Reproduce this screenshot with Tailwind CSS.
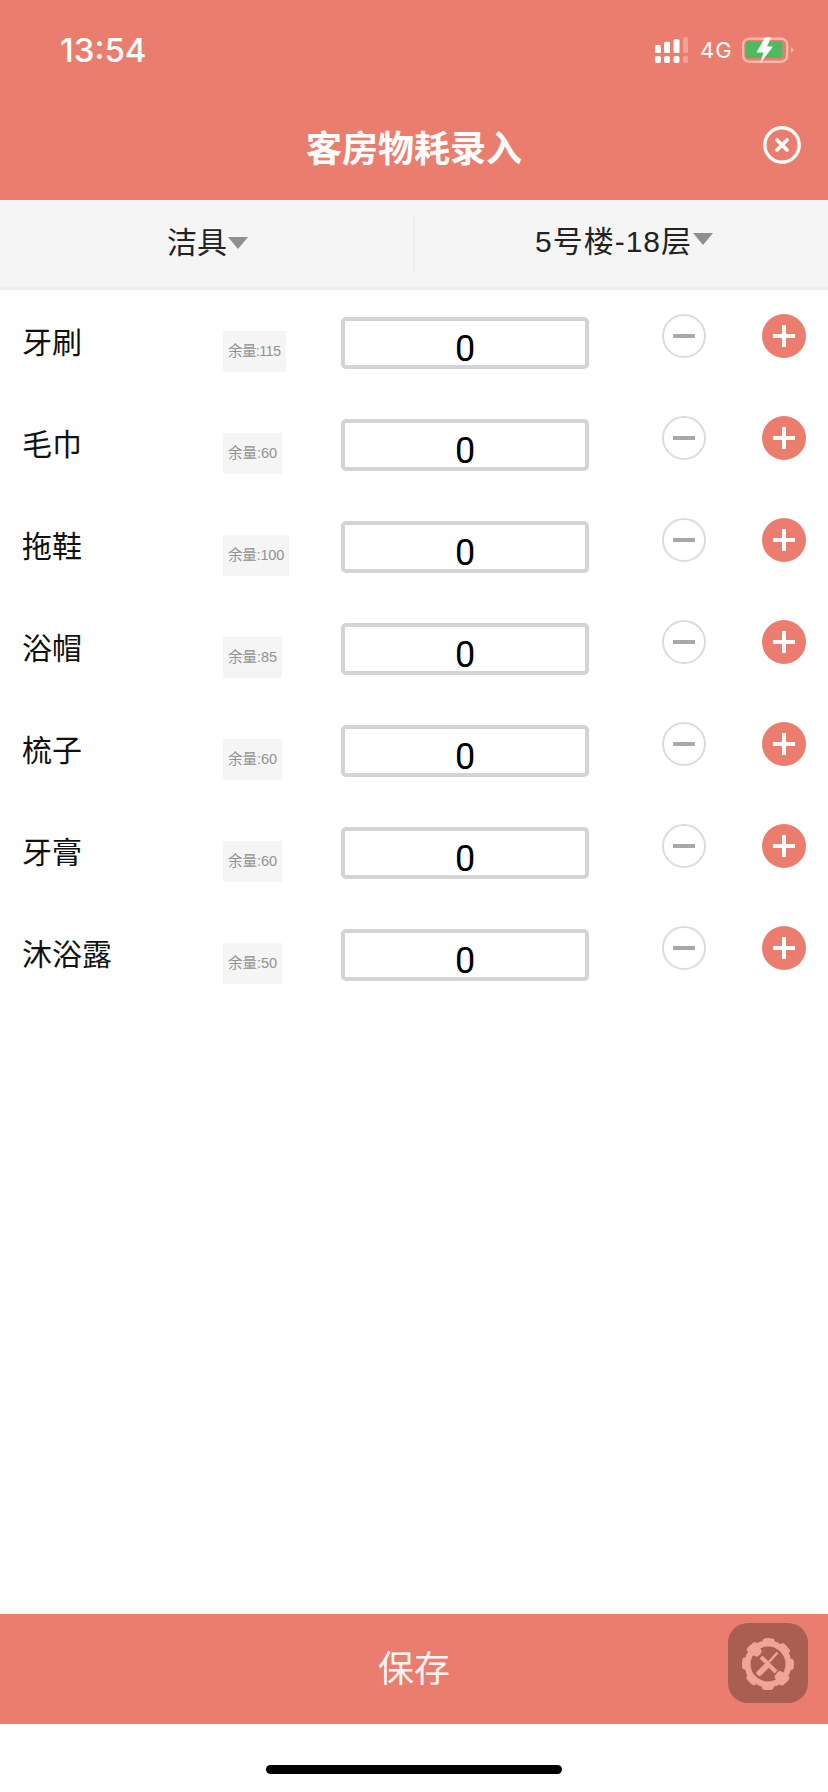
<!DOCTYPE html>
<html lang="zh">

<head>
    <meta charset="UTF-8" />
    <meta name="viewport" content="width=device-width, initial-scale=1.0" />
    <title>客房物耗录入</title>
    <script src="https://cdn.jsdelivr.net/npm/@tailwindcss/browser@4"></script>
</head>

<body class="bg-white">
    <div class="w-[828px] h-[1792px] flex flex-col font-['Liberation_Sans','Noto_Sans_CJK_SC',sans-serif] text-[#222]">
        <!-- 顶部 -->
        <header class="h-[200px] bg-[#ea7d6d] text-white flex flex-col shrink-0">
            <div class="h-[94px] pt-[6px] pl-[60px] pr-[34px] flex items-center justify-between">
                <span class="font-['Inter',sans-serif] font-medium text-[33px] leading-none">13:54</span>
                <div class="flex items-center">
                    <svg width="34" height="27" viewBox="0 0 34 27" fill="#fff">
                        <rect x="0" y="8" width="6" height="8" rx="1.500" />
                        <rect x="9" y="4.700" width="6" height="11.300" rx="1.500" />
                        <rect x="18.500" y="2.300" width="6" height="13.700" rx="1.500" />
                        <rect x="28" y="0.300" width="5" height="15.700" rx="1.500" fill-opacity=".3" />
                        <rect x="0" y="19" width="6" height="7" rx="2" />
                        <rect x="9" y="19" width="6" height="7" rx="2" />
                        <rect x="18.500" y="19" width="6" height="7" rx="2" />
                        <rect x="28" y="19" width="5" height="7" rx="2" fill-opacity=".3" />
                    </svg>
                    <span class="ml-[11px] w-[31px] font-['Inter',sans-serif] text-[22px] tracking-[1px] leading-none">4G</span>
                    <svg class="ml-[11px]" width="52" height="27" viewBox="0 0 52 27">
                        <rect x="1.200" y="1.700" width="44" height="23" rx="6" fill="none" stroke="#fff" stroke-opacity=".45" stroke-width="2.400" />
                        <rect x="3.500" y="4.500" width="37" height="16.500" rx="2" fill="#4cbb5e" />
                        <path d="M49 10 L52 13 L49 16 Z" fill="#fff" fill-opacity=".5" />
                        <path d="M23 0.500 L14.500 15.500 L21.500 15.500 L18 26.500 L31 9.500 L25 9.500 L29 0.500 Z" fill="#fff" />
                    </svg>
                </div>
            </div>
            <div class="relative h-[106px] flex items-center justify-center">
                <h1 class="font-['Noto_Sans_CJK_SC',sans-serif] font-bold text-[36px] leading-none mb-[2px]">客房物耗录入</h1>
                <svg class="absolute left-[763px] top-[32px]" width="38" height="38" viewBox="0 0 38 38" fill="none" stroke="#fff">
                    <circle cx="19" cy="19" r="17.200" stroke-width="3.400" />
                    <path d="M14 14 L24 24 M24 14 L14 24" stroke-width="3.800" stroke-linecap="round" />
                </svg>
            </div>
        </header>

        <!-- 筛选 -->
        <div class="h-[90px] bg-[#f5f5f5] border-b-[3px] border-[#eeeeee] flex items-center shrink-0 text-[30px] text-[#222]">
            <div class="w-[415px] h-[58px] flex items-center pl-[167px] border-r-2 border-[#ebebeb]">
                <span class="leading-none mb-[2px]">洁具</span>
                <span class="ml-[1px] mb-[2px] w-0 h-0 border-x-[10px] border-x-transparent border-t-[12px] border-t-[#8f8f8f]"></span>
            </div>
            <div class="flex items-center pl-[120px] whitespace-nowrap">
                <span class="leading-none tracking-[1px] mb-[4px]">5号楼-18层</span>
                <span class="ml-[1px] mb-[9px] w-0 h-0 border-x-[10px] border-x-transparent border-t-[12px] border-t-[#8f8f8f]"></span>
            </div>
        </div>

        <!-- 物品列表 -->
        <main id="list" class="flex-1 pt-[10px]">
            <div class="h-[102px] flex items-start">
                <div class="w-[223px] pl-[22px] mt-[21px] text-[30px] leading-[44px] text-[#111]">牙刷</div>
                <div class="w-[118px] mt-[31px]"><span class="inline-block h-[41px] leading-[41px] px-[5px] bg-[#f5f5f5] text-[14.500px] tracking-[-0.6px] text-[#929292]">余量:115</span></div>
                <div class="w-[248px] h-[52px] mt-[17px] border-4 border-[#d4d4d4] rounded-[5px] text-center font-['Roboto',sans-serif] text-[36px] leading-[56px] text-black">0</div>
                <div class="w-[44px] h-[44px] mt-[14px] ml-[73px] rounded-full border-2 border-[#dcdcdc] flex items-center justify-center"><span class="w-[22px] h-[3.500px] bg-[#a8a8a8]"></span></div>
                <div class="relative w-[44px] h-[44px] mt-[14px] ml-[56px] rounded-full bg-[#ea7d6d] flex items-center justify-center"><span class="w-[22px] h-[3.500px] bg-white"></span><span class="absolute w-[3.500px] h-[22px] bg-white"></span></div>
            </div>
            <div class="h-[102px] flex items-start">
                <div class="w-[223px] pl-[22px] mt-[21px] text-[30px] leading-[44px] text-[#111]">毛巾</div>
                <div class="w-[118px] mt-[31px]"><span class="inline-block h-[41px] leading-[41px] px-[5px] bg-[#f5f5f5] text-[14.500px] text-[#929292]">余量:60</span></div>
                <div class="w-[248px] h-[52px] mt-[17px] border-4 border-[#d4d4d4] rounded-[5px] text-center font-['Roboto',sans-serif] text-[36px] leading-[56px] text-black">0</div>
                <div class="w-[44px] h-[44px] mt-[14px] ml-[73px] rounded-full border-2 border-[#dcdcdc] flex items-center justify-center"><span class="w-[22px] h-[3.500px] bg-[#a8a8a8]"></span></div>
                <div class="relative w-[44px] h-[44px] mt-[14px] ml-[56px] rounded-full bg-[#ea7d6d] flex items-center justify-center"><span class="w-[22px] h-[3.500px] bg-white"></span><span class="absolute w-[3.500px] h-[22px] bg-white"></span></div>
            </div>
            <div class="h-[102px] flex items-start">
                <div class="w-[223px] pl-[22px] mt-[21px] text-[30px] leading-[44px] text-[#111]">拖鞋</div>
                <div class="w-[118px] mt-[31px]"><span class="inline-block h-[41px] leading-[41px] px-[5px] bg-[#f5f5f5] text-[14.500px] tracking-[-0.2px] text-[#929292]">余量:100</span></div>
                <div class="w-[248px] h-[52px] mt-[17px] border-4 border-[#d4d4d4] rounded-[5px] text-center font-['Roboto',sans-serif] text-[36px] leading-[56px] text-black">0</div>
                <div class="w-[44px] h-[44px] mt-[14px] ml-[73px] rounded-full border-2 border-[#dcdcdc] flex items-center justify-center"><span class="w-[22px] h-[3.500px] bg-[#a8a8a8]"></span></div>
                <div class="relative w-[44px] h-[44px] mt-[14px] ml-[56px] rounded-full bg-[#ea7d6d] flex items-center justify-center"><span class="w-[22px] h-[3.500px] bg-white"></span><span class="absolute w-[3.500px] h-[22px] bg-white"></span></div>
            </div>
            <div class="h-[102px] flex items-start">
                <div class="w-[223px] pl-[22px] mt-[21px] text-[30px] leading-[44px] text-[#111]">浴帽</div>
                <div class="w-[118px] mt-[31px]"><span class="inline-block h-[41px] leading-[41px] px-[5px] bg-[#f5f5f5] text-[14.500px] text-[#929292]">余量:85</span></div>
                <div class="w-[248px] h-[52px] mt-[17px] border-4 border-[#d4d4d4] rounded-[5px] text-center font-['Roboto',sans-serif] text-[36px] leading-[56px] text-black">0</div>
                <div class="w-[44px] h-[44px] mt-[14px] ml-[73px] rounded-full border-2 border-[#dcdcdc] flex items-center justify-center"><span class="w-[22px] h-[3.500px] bg-[#a8a8a8]"></span></div>
                <div class="relative w-[44px] h-[44px] mt-[14px] ml-[56px] rounded-full bg-[#ea7d6d] flex items-center justify-center"><span class="w-[22px] h-[3.500px] bg-white"></span><span class="absolute w-[3.500px] h-[22px] bg-white"></span></div>
            </div>
            <div class="h-[102px] flex items-start">
                <div class="w-[223px] pl-[22px] mt-[21px] text-[30px] leading-[44px] text-[#111]">梳子</div>
                <div class="w-[118px] mt-[31px]"><span class="inline-block h-[41px] leading-[41px] px-[5px] bg-[#f5f5f5] text-[14.500px] text-[#929292]">余量:60</span></div>
                <div class="w-[248px] h-[52px] mt-[17px] border-4 border-[#d4d4d4] rounded-[5px] text-center font-['Roboto',sans-serif] text-[36px] leading-[56px] text-black">0</div>
                <div class="w-[44px] h-[44px] mt-[14px] ml-[73px] rounded-full border-2 border-[#dcdcdc] flex items-center justify-center"><span class="w-[22px] h-[3.500px] bg-[#a8a8a8]"></span></div>
                <div class="relative w-[44px] h-[44px] mt-[14px] ml-[56px] rounded-full bg-[#ea7d6d] flex items-center justify-center"><span class="w-[22px] h-[3.500px] bg-white"></span><span class="absolute w-[3.500px] h-[22px] bg-white"></span></div>
            </div>
            <div class="h-[102px] flex items-start">
                <div class="w-[223px] pl-[22px] mt-[21px] text-[30px] leading-[44px] text-[#111]">牙膏</div>
                <div class="w-[118px] mt-[31px]"><span class="inline-block h-[41px] leading-[41px] px-[5px] bg-[#f5f5f5] text-[14.500px] text-[#929292]">余量:60</span></div>
                <div class="w-[248px] h-[52px] mt-[17px] border-4 border-[#d4d4d4] rounded-[5px] text-center font-['Roboto',sans-serif] text-[36px] leading-[56px] text-black">0</div>
                <div class="w-[44px] h-[44px] mt-[14px] ml-[73px] rounded-full border-2 border-[#dcdcdc] flex items-center justify-center"><span class="w-[22px] h-[3.500px] bg-[#a8a8a8]"></span></div>
                <div class="relative w-[44px] h-[44px] mt-[14px] ml-[56px] rounded-full bg-[#ea7d6d] flex items-center justify-center"><span class="w-[22px] h-[3.500px] bg-white"></span><span class="absolute w-[3.500px] h-[22px] bg-white"></span></div>
            </div>
            <div class="h-[102px] flex items-start">
                <div class="w-[223px] pl-[22px] mt-[21px] text-[30px] leading-[44px] text-[#111]">沐浴露</div>
                <div class="w-[118px] mt-[31px]"><span class="inline-block h-[41px] leading-[41px] px-[5px] bg-[#f5f5f5] text-[14.500px] text-[#929292]">余量:50</span></div>
                <div class="w-[248px] h-[52px] mt-[17px] border-4 border-[#d4d4d4] rounded-[5px] text-center font-['Roboto',sans-serif] text-[36px] leading-[56px] text-black">0</div>
                <div class="w-[44px] h-[44px] mt-[14px] ml-[73px] rounded-full border-2 border-[#dcdcdc] flex items-center justify-center"><span class="w-[22px] h-[3.500px] bg-[#a8a8a8]"></span></div>
                <div class="relative w-[44px] h-[44px] mt-[14px] ml-[56px] rounded-full bg-[#ea7d6d] flex items-center justify-center"><span class="w-[22px] h-[3.500px] bg-white"></span><span class="absolute w-[3.500px] h-[22px] bg-white"></span></div>
            </div>
        </main>

        <!-- 保存 -->
        <div class="relative h-[110px] bg-[#ea7d6d] flex items-center justify-center shrink-0">
            <span class="text-white/95 text-[36px] leading-none font-['Noto_Sans_CJK_SC',sans-serif] mb-[6px]">保存</span>
            <div class="absolute left-[728px] top-[9px] w-[80px] h-[80px] rounded-[20px] bg-[#a85e50]">
                <svg width="80" height="80" viewBox="0 0 80 80" fill="none" stroke="#efa497">
                    <circle cx="40" cy="41" r="20.500" stroke-width="6" />
                    <circle cx="40" cy="41" r="23.500" stroke-width="5" stroke-linecap="round" stroke-dasharray="7 11.460" stroke-dashoffset="3.500" />
                    <path d="M49.500 29.500 L41 39" stroke-width="2.400" />
                    <path d="M38 43.500 L31.500 50" stroke-width="6" stroke-linecap="round" />
                    <path d="M33 34 L48 49" stroke-width="4" />
                    <path d="M33.500 29.500 A5 5 0 1 0 29.500 33.500 L32 31.500 Z" fill="#efa497" stroke="none" />
                    <path d="M46.500 53 A5 5 0 1 0 51 48 L48.500 50.500 Z" fill="#efa497" stroke="none" />
                </svg>
            </div>
        </div>

        <!-- home indicator -->
        <div class="h-[68px] flex justify-center shrink-0 pt-[41px]">
            <div class="w-[296px] h-[9px] rounded-full bg-black"></div>
        </div>
    </div>
</body>

</html>
